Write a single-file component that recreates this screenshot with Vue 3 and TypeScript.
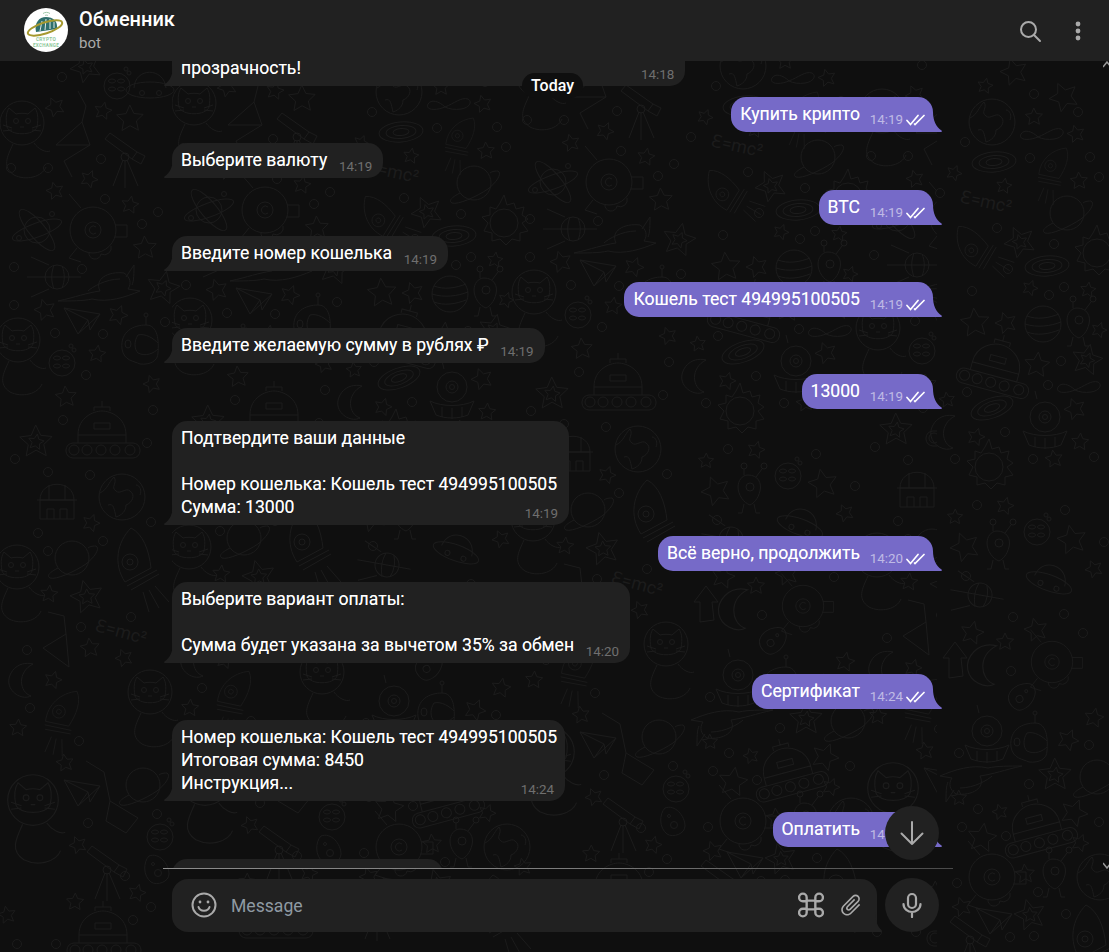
<script setup lang="ts">
interface Message {
  id: number
  text: string
  time: string
  out?: boolean
  tight?: boolean
}

const messages: Message[] = [
  { id: 1, text: 'Гарантируем — скорость, безопасность, удобство и полную\nпрозрачность!', time: '14:18' },
  { id: 2, text: 'Купить крипто', time: '14:19', out: true },
  { id: 3, text: 'Выберите валюту', time: '14:19' },
  { id: 4, text: 'BTC', time: '14:19', out: true },
  { id: 5, text: 'Введите номер кошелька', time: '14:19' },
  { id: 6, text: 'Кошель тест 494995100505', time: '14:19', out: true },
  { id: 7, text: 'Введите желаемую сумму в рублях ₽', time: '14:19' },
  { id: 8, text: '13000', time: '14:19', out: true },
  { id: 9, text: 'Подтвердите ваши данные\n\nНомер кошелька: Кошель тест 494995100505\nСумма: 13000', time: '14:19' },
  { id: 10, text: 'Всё верно, продолжить', time: '14:20', out: true },
  { id: 11, text: 'Выберите вариант оплаты:\n\nСумма будет указана за вычетом 35% за обмен', time: '14:20' },
  { id: 12, text: 'Сертификат', time: '14:24', out: true },
  { id: 13, text: 'Номер кошелька: Кошель тест 494995100505\nИтоговая сумма: 8450\nИнструкция...', time: '14:24', tight: true },
  { id: 14, text: 'Оплатить', time: '14:24', out: true },
  { id: 15, text: 'Проверяем вашу оплату!', time: '14:24' },
]

type Pt = [number, number, number?]

// doodles on the wallpaper, read off the reference
const leftStars: Pt[] = [[55, 107, 10], [103, 111, 9], [130, 119, 14], [55, 191, 9], [89, 179, 9], [130, 205, 9], [145, 248, 12], [45, 310, 11], [118, 315, 10], [97, 354, 9], [66, 397, 11], [152, 384, 9], [91, 523, 9], [49, 594, 9], [90, 648, 10], [124, 658, 9], [53, 680, 9], [18, 728, 9], [65, 763, 9], [78, 845, 9], [137, 893, 9], [75, 902, 9], [7, 915, 9]]
const leftDoubles: Pt[] = [[86, 67, 16], [163, 288, 17], [36, 442, 17], [87, 597, 17]]
const leftCircles: Pt[] = [[62, 77], [11, 168], [48, 168], [101, 159], [105, 199], [142, 224], [158, 212], [14, 267], [82, 269], [14, 305], [55, 333], [103, 334], [165, 322], [86, 375], [63, 420], [153, 410], [147, 443], [15, 459], [48, 472], [90, 475], [38, 533], [151, 522], [103, 541], [48, 551], [81, 627], [131, 617], [27, 650], [30, 708], [79, 741], [157, 814], [88, 823], [125, 876], [151, 907], [133, 920], [56, 944], [17, 944]]
const rightStars: Pt[] = [[1064, 97, 15], [985, 86, 8], [1034, 117, 9], [1076, 134, 9], [954, 173, 8], [1004, 186, 8], [1079, 181, 9], [1014, 72, 14], [1030, 288, 8], [1088, 290, 8], [975, 323, 15], [1006, 323, 11], [1099, 330, 8], [1037, 365, 13], [947, 400, 8], [1075, 409, 11], [976, 437, 9], [1080, 442, 9], [1054, 459, 9], [965, 547, 15], [1005, 506, 9], [955, 517, 8], [1072, 540, 15], [1094, 569, 9], [972, 633, 12], [1005, 642, 9], [1036, 630, 12], [1068, 740, 11], [1094, 718, 10], [959, 798, 8], [1000, 812, 8], [1074, 813, 14], [982, 838, 15], [1025, 874, 10], [962, 907, 10], [1080, 843, 9]]
const rightDoubles: Pt[] = [[1020, 242, 16], [1087, 360, 16], [1055, 775, 17], [1030, 915, 16]]
const rightCircles: Pt[] = [[1034, 94], [1078, 112], [965, 142], [1030, 158], [1090, 157], [1099, 177], [940, 193], [997, 228], [1054, 244], [1008, 269], [972, 291], [1064, 287], [1049, 295], [1061, 361], [1048, 385], [967, 392], [1005, 432], [955, 459], [1033, 459], [1094, 457], [977, 505], [1065, 510], [1104, 542], [966, 576], [1013, 617], [1064, 614], [1083, 633], [1011, 671], [1089, 745], [959, 753], [1029, 784], [978, 809], [962, 827], [1006, 836], [1099, 822], [957, 883], [1038, 892], [1066, 914], [1010, 937], [1034, 936]]

interface Shape {
  id: string
  x: number
  y: number
  s?: number
  r?: number
}

const leftShapes: Shape[] = [
  { id: 'moon', x: 117, y: 86 }, { id: 'ufo', x: 150, y: 87 }, { id: 'cat', x: 22, y: 123 },
  { id: 'telescope', x: 125, y: 157 }, { id: 'atom', x: 37, y: 230 }, { id: 'eyebot', x: 93, y: 230 },
  { id: 'sputnik', x: 57, y: 277 }, { id: 'ship', x: 100, y: 287 }, { id: 'plane', x: 82, y: 320 },
  { id: 'helmet', x: 140, y: 345 }, { id: 'cat', x: 18, y: 340 }, { id: 'moon', x: 62, y: 363 },
  { id: 'rover', x: 102, y: 437 }, { id: 'dome', x: 57, y: 505 }, { id: 'earth', x: 122, y: 497 },
  { id: 'rocket', x: 135, y: 560 }, { id: 'cat', x: 17, y: 567 }, { id: 'saturn', x: 72, y: 558 },
  { id: 'crescent', x: 25, y: 680 }, { id: 'rocket', x: 63, y: 713, s: 0.8, r: 40 }, { id: 'cat', x: 150, y: 692 },
  { id: 'saturn', x: 143, y: 785 }, { id: 'plane', x: 82, y: 792 }, { id: 'cat', x: 33, y: 800, s: 1.15 },
  { id: 'telescope', x: 107, y: 870 }, { id: 'moon', x: 160, y: 837 }, { id: 'asteroid', x: 157, y: 870 },
  { id: 'rover', x: 103, y: 937 },
]

const rightShapes: Shape[] = [
  { id: 'earth', x: 992, y: 122 }, { id: 'infinity', x: 1042, y: 135 }, { id: 'galaxy', x: 994, y: 162 },
  { id: 'rocket', x: 1054, y: 167, s: 0.7, r: 40 }, { id: 'saturn', x: 1067, y: 213 }, { id: 'rocket', x: 974, y: 247, s: 0.8, r: -30 },
  { id: 'galaxy', x: 1047, y: 266 }, { id: 'sun', x: 1097, y: 253 }, { id: 'striped', x: 1043, y: 324 },
  { id: 'alien', x: 1079, y: 322 }, { id: 'rover', x: 995, y: 370, r: 15 }, { id: 'infinity', x: 1079, y: 388 },
  { id: 'galaxy', x: 992, y: 408, r: -15 }, { id: 'domeufo', x: 1045, y: 423 }, { id: 'crescent', x: 947, y: 432 },
  { id: 'sun', x: 989, y: 467 }, { id: 'alien', x: 999, y: 545 }, { id: 'moon', x: 1037, y: 532 },
  { id: 'ufo', x: 1050, y: 580, r: 20 }, { id: 'sputnik', x: 980, y: 595, r: 10 }, { id: 'crescent', x: 987, y: 665, s: 1.2 },
  { id: 'eyebot', x: 1052, y: 662, s: 0.9 }, { id: 'asteroid', x: 1022, y: 697, r: 70 }, { id: 'arrow', x: 955, y: 660 },
  { id: 'domeufo', x: 987, y: 737 }, { id: 'helmet', x: 1029, y: 743 }, { id: 'ship', x: 980, y: 780, r: 180 },
  { id: 'saturn', x: 1097, y: 777 }, { id: 'rover', x: 1037, y: 830, r: -15 }, { id: 'alien', x: 1055, y: 873 },
  { id: 'earth', x: 1100, y: 877 }, { id: 'eyebot', x: 992, y: 877 }, { id: 'plane', x: 994, y: 920 },
  { id: 'rocket', x: 1090, y: 937 }, { id: 'telescope', x: 970, y: 940 },
]

// tile copies behind the messages
const leftCopies = [[172, -20], [516, -48], [860, -12]]
const rightCopies = [[-593, -30], [-249, -56]]

function starPath(p: Pt, i: number): string {
  const [x, y, r = 10] = p
  const start = -Math.PI / 2 + ((i * 37) % 50 - 25) * Math.PI / 180
  let d = ''
  for (let k = 0; k < 10; k++) {
    const rad = k % 2 ? r * 0.48 : r
    const a = start + k * Math.PI / 5
    d += `${k ? 'L' : 'M'}${(x + rad * Math.cos(a)).toFixed(1)} ${(y + rad * Math.sin(a)).toFixed(1)}`
  }
  return d + 'Z'
}

function doublePath(p: Pt, i: number): string {
  const [x, y, r = 16] = p
  return starPath(p, i) + starPath([x, y, r * 0.48], i + 3)
}

function place(s: Shape): string {
  return `translate(${s.x} ${s.y}) rotate(${s.r ?? 0}) scale(${s.s ?? 1})`
}
</script>

<template>
  <div class="app">
    <svg class="wallpaper" width="1109" height="952" viewBox="0 0 1109 952" aria-hidden="true">
      <defs>
        <clipPath id="mid"><rect x="172" y="0" width="765" height="952" /></clipPath>
        <g id="cat">
          <circle r="22" />
          <path d="M-15 4C-17-6-15-12-13-15L-6-9C-2-10 2-10 6-9L13-15C15-12 17-6 15 4C12 13-12 13-15 4Z" />
          <circle cx="-6" cy="-2" r="2.5" /><circle cx="6" cy="-2" r="2.5" />
          <path d="M-2 4H2M-19 2L-10 5M-19 8L-10 7M19 2L10 5M19 8L10 7M-9 21C-15 34-20 44-8 52C4 58 20 54 24 44M12 20C16 26 24 30 28 28" />
        </g>
        <g id="moon">
          <circle r="13" />
          <ellipse cx="-5" cy="-5" rx="3.5" ry="2" /><ellipse cx="4" cy="-5" rx="3.5" ry="2" />
          <ellipse cx="-5" cy="3" rx="3.5" ry="2" /><ellipse cx="4" cy="3" rx="3.5" ry="2" />
          <circle cx="9" cy="-17" r="2" /><circle cx="12" cy="-13" r="2" />
        </g>
        <g id="ufo">
          <path d="M-16 1C-15-20 14-20 16 1" /><ellipse cy="3" rx="24" ry="8" />
          <circle cx="-8" cy="6" r="2.5" /><circle cx="9" cy="6" r="2.5" />
        </g>
        <g id="telescope">
          <path d="M-20-18L-15-24L12-5L7 2ZM12-5L20-1L16 7L7 2" /><circle r="4" />
          <path d="M-2 3L-12 29M0 3V31M2 3L13 29" />
        </g>
        <g id="atom">
          <circle r="13" /><ellipse rx="26" ry="7" transform="rotate(-20)" /><ellipse rx="26" ry="8" transform="rotate(50)" />
          <circle cx="-18" cy="8" r="2.5" /><circle cx="15" cy="-16" r="2.5" />
        </g>
        <g id="eyebot">
          <circle r="23" /><circle r="8" /><path d="M3-3A4 4 0 1 0 3 3M-12-22L-24-36M22-5H34V7H22M-16 18L-24 28L-12 32M-4 22A6 6 0 0 0 8 24A7 7 0 0 0 18 16" />
        </g>
        <g id="sputnik">
          <circle r="12" /><path d="M-30 0H24M-3-12C-6-4-6 4-3 12M5-11C8-4 8 4 5 11M-26-20L-8-12M-26 20L-8 12" />
        </g>
        <g id="ship">
          <path d="M-42 14C-24 10-14 6 0 4C-6-8 8-16 24-14C30-10 32-4 28 2L40 4C26 10 8 16-8 12C-16 14-30 14-42 14ZM-12 4C-8 0 6-8 20-8M26-10L34-22C34-14 34-6 32-2" />
        </g>
        <g id="plane">
          <path d="M-18-12L18-6L-4 14ZM-18-12L6 0L8 10L18-6M6 0L-4 14" />
        </g>
        <g id="helmet">
          <path d="M-18 4C-20-14-6-20 6-20C18-20 19-4 18 8C18 16 10 20 0 19C-6 16-16 16-18 4ZM-2-10C6-12 14-6 18-2M-2 8C6 12 14 8 18 4M-2-10C-6-4-6 4-2 8M6-20V-28" /><circle cx="6" cy="-30" r="2" /><ellipse cx="-12" cy="-1" rx="3" ry="4" />
        </g>
        <g id="rover">
          <path d="M-24-2C-24-20-8-26 0-26C8-26 24-20 24-2ZM-8-14H8V-8H-8ZM-8-26V-30H8V-26M-24-2V6M24-2V6M0-30V-36" />
          <rect x="-36" y="6" width="74" height="15" rx="7" />
          <circle cx="-28" cy="13" r="5" /><circle cx="-15" cy="13" r="5" /><circle cx="-1" cy="13" r="5" /><circle cx="13" cy="13" r="5" /><circle cx="28" cy="13" r="5" />
        </g>
        <g id="dome">
          <path d="M-17-5C-17-26 17-26 17-5ZM-20-5H20M-17-5V14H17V-5M-8-5V-20M8-5V-20M-10 14V4H-3V14M3 14V4H10V14" />
        </g>
        <g id="earth">
          <circle r="23" /><path d="M-22-4C-14-8-14-14-8-20C-4-14-12-10-6-6C-2-2 4-10 8-6C14-2 10 6 4 8C4 14 0 18-6 20C-8 12-8 6-14 8M14-12C18-12 20-6 18-2" />
        </g>
        <g id="rocket">
          <path d="M-4-32C-18-18-22 4-10 22L16 8C14-10 8-26-4-32ZM-13 2A8 8 0 1 0 3 2A8 8 0 1 0-13 2ZM-8 2A3 3 0 1 0-2 2A3 3 0 1 0-8 2ZM-8 26L22 10M-4 30L24 14M8 32L14 52M14 30L24 48M20 26L34 42" />
        </g>
        <g id="saturn">
          <circle r="17" /><path d="M-14 10C-22 14-26 18-22 20C-16 22 2 14 14 6C24-2 28-10 24-12C22-12 18-12 16-10" />
        </g>
        <g id="crescent">
          <path d="M8-16C-8-20-18-6-16 4C-14 14-2 20 6 16C-6 12-8-8 8-16Z" />
        </g>
        <g id="asteroid">
          <path d="M-8-14C2-18 12-6 12 4C12 12 0 16-6 12C-14 6-14-8-8-14Z" /><circle cx="1" cy="3" r="3.5" /><circle cx="-4" cy="-6" r="1.5" />
        </g>
        <g id="galaxy">
          <ellipse rx="22" ry="10" transform="rotate(-5)" /><ellipse rx="15" ry="6.5" transform="rotate(-5)" /><ellipse rx="8" ry="3.5" transform="rotate(-5)" />
        </g>
        <g id="infinity">
          <path d="M-4 2C-10-4-18-6-21-1C-24 5-14 6-4 2C6-2 12-8 19-6C24-3 20 3 12 4C6 5 0 4-4 2" />
        </g>
        <g id="sun">
          <circle r="14" /><path d="M0-28L3-18L10-20L12-14L20-16L18-8L24-4L18 0L24 8L16 10L16 18L8 16L2 22L-4 16L-12 18L-12 10L-20 8L-16 0L-22-6L-14-8L-14-16L-8-14L-4-20Z" />
        </g>
        <g id="striped">
          <circle r="18" /><path d="M-16-8C-6-4 6-6 16-10M-18 0C-6 4 8 2 18-2M-16 8C-6 12 6 10 16 6" />
        </g>
        <g id="alien">
          <path d="M-2-14C8-14 12-6 10 2C8 10 4 14 0 16C-6 14-12 6-12-2C-12-8-8-14-2-14Z" /><circle cy="-2" r="4" />
          <path d="M-6-14L-6-20M6-12L12-20M-6 15L-8 24H-12M4 15L6 24H10" /><circle cx="-6" cy="-23" r="3" /><circle cx="14" cy="-23" r="3" />
        </g>
        <g id="domeufo">
          <circle cy="-6" r="15" /><circle cy="-6" r="6" /><circle cy="-6" r="2.5" />
          <path d="M-22 8C-10 14 10 14 22 8L16 22C6 26-6 26-16 22ZM-10 14V24M0 15V26M10 14V24M-8-24L-10-32" />
        </g>
        <g id="arrow">
          <path d="M0-18L12-2L6-2L8 16L-6 18L-6-2L-12-2Z" />
        </g>
        <g id="left">
          <path v-for="(p, i) in leftStars" :key="i" :d="starPath(p, i)" />
          <path v-for="(p, i) in leftDoubles" :key="i" :d="doublePath(p, i)" />
          <circle v-for="(p, i) in leftCircles" :key="i" :cx="p[0]" :cy="p[1]" r="4.5" />
          <use v-for="(s, i) in leftShapes" :key="i" :href="`#${s.id}`" :transform="place(s)" />
          <path d="M78 91L86 106L82 122L56 145L90 145L64 161L72 177M82 122L90 145" />
          <path d="M48 612L64 616L66 634L43 648L69 667L66 634M86 761L104 772L110 801L106 821L126 833L138 818L110 801" />
          <text class="emc" x="95" y="638" transform="rotate(15 122 632)">Ɛ=mc²</text>
        </g>
        <g id="right">
          <path v-for="(p, i) in rightStars" :key="i" :d="starPath(p, i)" />
          <path v-for="(p, i) in rightDoubles" :key="i" :d="doublePath(p, i)" />
          <circle v-for="(p, i) in rightCircles" :key="i" :cx="p[0]" :cy="p[1]" r="4.5" />
          <use v-for="(s, i) in rightShapes" :key="i" :href="`#${s.id}`" :transform="place(s)" />
          <text class="emc" x="960" y="208" transform="rotate(12 987 202)">Ɛ=mc²</text>
        </g>
      </defs>
      <use href="#left" />
      <use href="#right" />
      <g clip-path="url(#mid)">
        <use v-for="(c, i) in leftCopies" :key="i" href="#left" :transform="`translate(${c[0]} ${c[1]})`" />
        <use v-for="(c, i) in rightCopies" :key="i" href="#right" :transform="`translate(${c[0]} ${c[1]})`" />
      </g>
    </svg>

    <header class="topbar">
      <svg class="avatar" width="44" height="44" viewBox="0 0 44 44">
        <circle cx="22" cy="22" r="22" fill="#fff" />
        <path d="M19 5.5C21 4 24 4 26 5.5M21 7.5C22 7 23 7 24 7.5" fill="none" stroke="#9fc9a8" stroke-width="1" />
        <path d="M12 24C10 15 15 9 22 9C29 9 34 13 33 21Z" fill="#2f6f6c" />
        <path d="M16 23L18 13M21 22L22 11M26 21L26 11M30 20L30 14" stroke="#dfe9e6" stroke-width="1" />
        <ellipse cx="21" cy="20" rx="18" ry="5.5" transform="rotate(-18 21 20)" fill="none" stroke="#a6992f" stroke-width="2" />
        <text class="logo-text" x="22" y="33" font-size="4.8">CRYPTO</text>
        <text class="logo-text" x="22" y="39" font-size="4.6">EXCHANGE</text>
      </svg>
      <div class="peer">
        <div class="peer-name">Обменник</div>
        <div class="peer-status">bot</div>
      </div>
      <svg class="top-icon search" width="24" height="24" viewBox="0 0 24 24" fill="none" stroke="#aaa" stroke-width="2" stroke-linecap="round">
        <circle cx="10.5" cy="10.5" r="7.5" />
        <path d="M16 16L22 22" />
      </svg>
      <svg class="top-icon" width="24" height="24" viewBox="0 0 24 24" fill="#aaa">
        <circle cx="12" cy="5" r="2.4" /><circle cx="12" cy="12" r="2.4" /><circle cx="12" cy="19" r="2.4" />
      </svg>
    </header>

    <main class="chat">
      <div class="list">
        <div v-for="m in messages" :key="m.id" class="bubble" :class="[m.out ? 'out' : 'in', { tight: m.tight }]">
          <span class="text">{{ m.text }}</span><span class="spacer"></span>
          <span class="meta">
            {{ m.time }}
            <svg v-if="m.out" class="checks" width="19" height="12" viewBox="0 0 19 12" fill="none" stroke="#fff" stroke-width="1.7" stroke-linecap="round">
              <path d="M1 6.5L4.5 10.5L12 1.5M8.5 10L9 10.5L18 1.5" />
            </svg>
          </span>
          <svg class="tail" width="9" height="20" viewBox="0 0 9 20">
            <path d="M0 0C0 8 3 15 8.5 18.6C9.2 19.2 9 20 8 20H0Z" fill="currentColor" />
          </svg>
        </div>
      </div>
      <div class="date-pill">Today</div>
      <button class="fab" type="button" aria-label="Scroll down">
        <svg width="28" height="28" viewBox="0 0 28 28" fill="none" stroke="#aaa" stroke-width="2" stroke-linecap="round" stroke-linejoin="round">
          <path d="M14 3V25M3.5 14.5L14 25L24.5 14.5" />
        </svg>
      </button>
    </main>

    <div class="divider"></div>

    <footer class="composer">
      <div class="input">
        <svg width="26" height="26" viewBox="0 0 26 26" fill="none" stroke="#aaa" stroke-width="2" stroke-linecap="round">
          <circle cx="13" cy="13" r="11.5" />
          <path d="M7.5 15C9 20 17 20 18.5 15" />
          <circle cx="9" cy="10" r="1.4" fill="#aaa" stroke="none" /><circle cx="17" cy="10" r="1.4" fill="#aaa" stroke="none" />
        </svg>
        <span class="placeholder">Message</span>
        <svg class="cmd" width="26" height="26" viewBox="0 0 24 24" fill="none" stroke="#aaa" stroke-width="2.2">
          <path d="M8 8H16V16H8ZM8 8V5A3.5 3.5 0 1 0 4.5 8.5H8M16 8V5A3.5 3.5 0 1 1 19.5 8.5H16M8 16V19A3.5 3.5 0 1 1 4.5 15.5H8M16 16V19A3.5 3.5 0 1 0 19.5 15.5H16" />
        </svg>
        <svg class="clip" width="26" height="26" viewBox="0 0 24 24" fill="#aaa">
          <path transform="rotate(45 12 12)" d="M16.5 6v11.5c0 2.21-1.79 4-4 4s-4-1.79-4-4V5c0-1.38 1.12-2.5 2.5-2.5s2.5 1.12 2.5 2.5v10.5c0 .55-.45 1-1 1s-1-.45-1-1V6H10v9.500c0 1.38 1.12 2.5 2.5 2.5s2.5-1.12 2.5-2.5V5c0-2.21-1.79-4-4-4S7 2.79 7 5v12.5c0 3.04 2.46 5.5 5.5 5.5s5.5-2.46 5.5-5.5V6h-1.500z" />
        </svg>
        <svg class="tail input-tail" width="9" height="20" viewBox="0 0 9 20">
          <path d="M0 0C0 8 3 15 6.5 18.6C7.2 19.2 7 20 6 20H0Z" fill="#212121" />
        </svg>
      </div>
      <button class="mic" type="button" aria-label="Record">
        <svg width="24" height="26" viewBox="0 0 24 26" fill="none" stroke="#aaa" stroke-width="2.2" stroke-linecap="round">
          <rect x="8" y="2" width="8" height="14" rx="4" />
          <path d="M3.5 12C3.5 17 8 20 12 20C16 20 20.5 17 20.5 12M12 20V25" />
        </svg>
      </button>
    </footer>

    <svg class="scroll-arrow up" width="6" height="8" viewBox="0 0 6 8" fill="none" stroke="#999" stroke-width="1.5"><path d="M0 6L4 1L8 6" /></svg>
    <svg class="scroll-arrow down" width="6" height="8" viewBox="0 0 6 8" fill="none" stroke="#999" stroke-width="1.5"><path d="M0 2L4 7L8 2" /></svg>
  </div>
</template>

<style scoped>
.app {
  position: relative;
  width: 1109px;
  height: 952px;
  display: flex;
  flex-direction: column;
  overflow: hidden;
  background: #0f0f0f;
  color: #fff;
  font-family: Roboto, "Noto Sans", sans-serif;
}

.wallpaper {
  position: absolute;
  inset: 0;
  fill: none;
  stroke: #1c1c1c;
  stroke-width: 1;
}

.emc {
  font-size: 18px;
  fill: #1c1c1c;
  stroke: none;
}

.logo-text {
  fill: #8cc79a;
  stroke: none;
  font-weight: 700;
  text-anchor: middle;
  letter-spacing: 0.3px;
}

.topbar {
  position: relative;
  z-index: 2;
  flex: none;
  height: 61px;
  display: flex;
  align-items: center;
  padding: 0 19px 0 24px;
  background: #212121;
}

.avatar {
  flex: none;
  margin-top: -1px;
}

.peer {
  flex: 1;
  margin-left: 11px;
}

.peer-name {
  font-size: 20px;
  font-weight: 500;
  line-height: 24px;
  margin-top: -2px;
}

.peer-status {
  font-size: 15px;
  line-height: 20px;
  color: #aaa;
  margin-top: 2px;
}

.top-icon {
  margin-left: 24px;
}

.chat {
  position: relative;
  z-index: 1;
  flex: 1;
  min-height: 0;
}

.list {
  position: absolute;
  inset: 0;
  overflow: hidden;
  display: flex;
  flex-direction: column;
  gap: 11.2px;
  padding: 0 176px 0 164px;
}

.bubble:first-child {
  margin-top: -33px;
}

.bubble {
  position: relative;
  flex: none;
  width: fit-content;
  max-width: 600px;
  padding: 6px 12px 6px 9px;
  border-radius: 15px;
  font-size: 17.6px;
  line-height: 23px;
  white-space: pre-line;
}

.bubble.in {
  align-self: flex-start;
  margin-left: 8px;
  background: #212121;
  color: #212121;
  border-bottom-left-radius: 0;
}

.bubble.out {
  align-self: flex-end;
  background: #766ac8;
  color: #766ac8;
  border-bottom-right-radius: 0;
}

.bubble.tight {
  padding-right: 8px;
}

.text {
  color: #fff;
  text-shadow: 0 0 0.4px rgba(255, 255, 255, 0.6);
}

.spacer {
  display: inline-block;
  width: 44px;
  height: 1px;
}

.out .spacer {
  width: 61px;
}

.meta {
  position: absolute;
  right: 11px;
  bottom: 1px;
  display: flex;
  align-items: center;
  font-size: 13.4px;
  line-height: 20px;
  white-space: nowrap;
  color: #6f6f6f;
}

.out .meta {
  right: 8px;
  bottom: 2px;
  color: rgba(255, 255, 255, 0.55);
}

.checks {
  margin-left: 3px;
}

.tail {
  position: absolute;
  bottom: 0;
}

.out .tail {
  right: -8.5px;
}

.in .tail {
  left: -8.5px;
  transform: scaleX(-1);
}

.date-pill {
  position: absolute;
  top: 12px;
  left: 522px;
  width: 61px;
  height: 25px;
  border-radius: 13px;
  background: #0f0f0f;
  font-size: 16px;
  font-weight: 500;
  line-height: 25px;
  text-align: center;
}

.fab {
  position: absolute;
  right: 170px;
  bottom: 8px;
  width: 54px;
  height: 54px;
  display: flex;
  align-items: center;
  justify-content: center;
  padding: 0;
  border: 0;
  border-radius: 50%;
  background: #212121;
}

.divider {
  position: relative;
  z-index: 1;
  flex: none;
  width: 790px;
  height: 1px;
  margin-left: 163px;
  background: linear-gradient(90deg, #8c8c8c, #7c7c7c 50%, #4a4a4a);
}

.composer {
  position: relative;
  z-index: 1;
  flex: none;
  display: flex;
  align-items: center;
  gap: 8px;
  padding: 9px 170px 20px 172px;
}

.input {
  position: relative;
  flex: 1;
  height: 53px;
  display: flex;
  align-items: center;
  padding: 0 13px 0 19px;
  background: #212121;
  border-radius: 16px 16px 0 16px;
}

.placeholder {
  flex: 1;
  margin: 1px 0 0 14px;
  font-size: 17.6px;
  color: #8f9aa3;
}

.clip {
  margin-left: 14px;
}

.input-tail {
  right: -7px;
}

.mic {
  flex: none;
  width: 54px;
  height: 54px;
  display: flex;
  align-items: center;
  justify-content: center;
  padding: 0;
  border: 0;
  border-radius: 50%;
  background: #212121;
}

.scroll-arrow {
  position: absolute;
  right: 0;
}

.scroll-arrow.up {
  top: 61px;
}

.scroll-arrow.down {
  top: 861px;
}
</style>
